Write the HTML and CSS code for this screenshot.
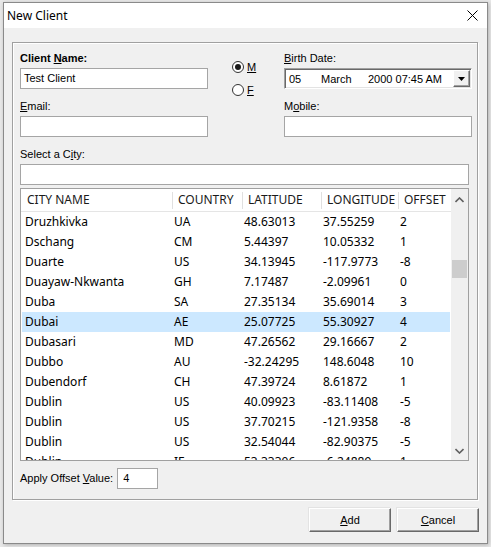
FILE: index.html
```html
<!DOCTYPE html>
<html>
<head>
<meta charset="utf-8">
<link rel="stylesheet" href="styles.css">
</head>
<body>
<div class="window">
  <div class="titlebar">
    <span class="title">New Client</span>
    <svg class="close" width="11" height="11" viewBox="0 0 11 11"><path d="M0.5 0.5 L10.5 10.5 M10.5 0.5 L0.5 10.5" stroke="#000" stroke-width="1"/></svg>
  </div>
  <div class="client">
    <div class="group">
      <div class="top-grid">
        <div class="field name">
          <div class="lbl bold">Client <u>N</u>ame:</div>
          <div class="textbox">Test Client</div>
        </div>
        <div class="radios">
          <div class="radio"><span class="circle checked"></span><u>M</u></div>
          <div class="radio"><span class="circle"></span><u>F</u></div>
        </div>
        <div class="field birth">
          <div class="lbl"><u>B</u>irth Date:</div>
          <div class="datepicker">
            <span class="d-day">05</span><span class="d-month">March</span><span class="d-rest">2000 07:45 AM</span>
            <span class="dd-btn"><svg width="7" height="4" viewBox="0 0 7 4"><path d="M0 0 H7 L3.5 4 Z" fill="#000"/></svg></span>
          </div>
        </div>
        <div class="field email">
          <div class="lbl"><u>E</u>mail:</div>
          <div class="textbox"></div>
        </div>
        <div class="field mobile">
          <div class="lbl">M<u>o</u>bile:</div>
          <div class="textbox"></div>
        </div>
      </div>
      <div class="field city">
        <div class="lbl">Select a C<u>i</u>ty:</div>
        <div class="textbox"></div>
      </div>
      <div class="listview">
        <div class="lv-main">
          <div class="lv-head">
            <div class="hc first">CITY NAME</div>
            <div class="hc">COUNTRY</div>
            <div class="hc">LATITUDE</div>
            <div class="hc">LONGITUDE</div>
            <div class="hc last">OFFSET</div>
          </div>
          <div class="lv-rows">
            <div class="lv-row"><span class="c1">Druzhkivka</span><span>UA</span><span>48.63013</span><span>37.55259</span><span>2</span></div>
            <div class="lv-row"><span class="c1">Dschang</span><span>CM</span><span>5.44397</span><span>10.05332</span><span>1</span></div>
            <div class="lv-row"><span class="c1">Duarte</span><span>US</span><span>34.13945</span><span>-117.9773</span><span>-8</span></div>
            <div class="lv-row"><span class="c1">Duayaw-Nkwanta</span><span>GH</span><span>7.17487</span><span>-2.09961</span><span>0</span></div>
            <div class="lv-row"><span class="c1">Duba</span><span>SA</span><span>27.35134</span><span>35.69014</span><span>3</span></div>
            <div class="lv-row selected"><span class="c1">Dubai</span><span>AE</span><span>25.07725</span><span>55.30927</span><span>4</span></div>
            <div class="lv-row"><span class="c1">Dubasari</span><span>MD</span><span>47.26562</span><span>29.16667</span><span>2</span></div>
            <div class="lv-row"><span class="c1">Dubbo</span><span>AU</span><span>-32.24295</span><span>148.6048</span><span>10</span></div>
            <div class="lv-row"><span class="c1">Dubendorf</span><span>CH</span><span>47.39724</span><span>8.61872</span><span>1</span></div>
            <div class="lv-row"><span class="c1">Dublin</span><span>US</span><span>40.09923</span><span>-83.11408</span><span>-5</span></div>
            <div class="lv-row"><span class="c1">Dublin</span><span>US</span><span>37.70215</span><span>-121.9358</span><span>-8</span></div>
            <div class="lv-row"><span class="c1">Dublin</span><span>US</span><span>32.54044</span><span>-82.90375</span><span>-5</span></div>
            <div class="lv-row"><span class="c1">Dublin</span><span>IE</span><span>53.33306</span><span>-6.24889</span><span>1</span></div>
          </div>
        </div>
        <div class="scrollbar">
          <svg class="arrow" width="9" height="6" viewBox="0 0 9 6"><path d="M0.5 5 L4.5 1 L8.5 5" fill="none" stroke="#606060" stroke-width="1.6"/></svg>
          <div class="track"><div class="thumb"></div></div>
          <svg class="arrow" width="9" height="6" viewBox="0 0 9 6"><path d="M0.5 1 L4.5 5 L8.5 1" fill="none" stroke="#606060" stroke-width="1.6"/></svg>
        </div>
      </div>
      <div class="offset-row">
        <span class="lbl">Apply Offset <u>V</u>alue:</span>
        <div class="textbox small">4</div>
      </div>
    </div>
    <div class="buttons">
      <div class="btn"><u>A</u>dd</div>
      <div class="btn"><u>C</u>ancel</div>
    </div>
  </div>
</div>
</body>
</html>
```

FILE: styles.css
```css
* {
  box-sizing: border-box;
}

html, body {
  margin: 0;
  padding: 0;
}

body {
  width: 491px;
  height: 547px;
  background: #e9e9e9;
  font-family: "Liberation Sans", Arial, sans-serif;
  font-size: 11px;
  color: #000;
  overflow: hidden;
  padding-top: 2px;
  padding-left: 3px;
}

.window {
  width: 485px;
  height: 542px;
  border: 1px solid #8a8a8a;
  background: #f0f0f0;
  display: flex;
  flex-direction: column;
  box-shadow: 1px 1px 4px rgba(0, 0, 0, 0.25);
}

.titlebar {
  height: 25px;
  flex: none;
  background: #fff;
  display: flex;
  align-items: center;
  justify-content: space-between;
  padding: 0 9px 0 3px;
}

.title {
  font-family: "Noto Sans", "Open Sans", sans-serif;
  font-size: 12px;
  color: #000;
}

.close {
  display: block;
}

.client {
  flex: 1;
  padding: 14px 8px 0 8px;
}

.group {
  border: 1px solid #a0a0a0;
  box-shadow: inset 1px 1px 0 #fff, 1px 1px 0 #fff;
  height: 458px;
  width: 466px;
  padding: 9px 8px 0 7px;
}

.top-grid {
  display: grid;
  grid-template-columns: 188px 1fr 188px;
  grid-template-rows: 37px 48px;
  margin-right: -3px;
}

.name {
  grid-column: 1;
  grid-row: 1;
}

.radios {
  grid-column: 2;
  grid-row: 1 / span 2;
}

.birth {
  grid-column: 3;
  grid-row: 1;
}

.email {
  grid-column: 1;
  grid-row: 2;
  padding-top: 11px;
}

.mobile {
  grid-column: 3;
  grid-row: 2;
  padding-top: 11px;
}

.field {
  display: flex;
  flex-direction: column;
}

.lbl {
  line-height: 13px;
  height: 13px;
  white-space: nowrap;
}

.field .lbl {
  margin-bottom: 3px;
}

.bold {
  font-weight: bold;
}

.textbox {
  height: 21px;
  border: 1px solid #a5a5a5;
  background: #fff;
  padding: 3px 3px;
  line-height: 13px;
  flex: none;
}

.radios {
  padding-left: 24px;
  padding-top: 9px;
}

.radio {
  display: flex;
  align-items: center;
  height: 12px;
  margin-bottom: 11px;
  line-height: 12px;
}

.circle {
  width: 12px;
  height: 12px;
  border: 1px solid #333;
  border-radius: 50%;
  background: #fff;
  margin-right: 3px;
  position: relative;
}

.circle.checked::after {
  content: "";
  position: absolute;
  left: 2px;
  top: 2px;
  width: 6px;
  height: 6px;
  border-radius: 50%;
  background: #1a1a1a;
}

.datepicker {
  height: 21px;
  background: #fff;
  border-top: 1px solid #a0a0a0;
  border-left: 1px solid #a0a0a0;
  border-right: 1px solid #fff;
  border-bottom: 1px solid #fff;
  box-shadow: inset 1px 1px 0 #696969, inset -1px -1px 0 #e3e3e3;
  display: flex;
  align-items: center;
  padding-left: 4px;
  padding-right: 1px;
}

.d-day {
  width: 32px;
}

.d-month {
  width: 47px;
}

.d-rest {
  flex: 1;
}

.dd-btn {
  width: 17px;
  height: 17px;
  background: #f0f0f0;
  border-top: 1px solid #fff;
  border-left: 1px solid #fff;
  border-right: 1px solid #696969;
  border-bottom: 1px solid #696969;
  box-shadow: inset -1px -1px 0 #a0a0a0;
  display: flex;
  align-items: center;
  justify-content: center;
}

.dd-btn svg {
  display: block;
}

.city {
  margin-top: 11px;
}

.city .lbl {
  margin-bottom: 3px;
}

.listview {
  margin-top: 3px;
  height: 273px;
  border: 1px solid #a0a0a0;
  background: #fff;
  display: flex;
  overflow: hidden;
}

.lv-main {
  flex: 1;
  min-width: 0;
  overflow: hidden;
  font-family: "Noto Sans", "Open Sans", sans-serif;
  font-size: 12px;
}

.lv-head {
  display: grid;
  grid-template-columns: 152px 70px 79px 77px 1fr;
  height: 23px;
  border-bottom: 1px solid #e5e5e5;
  color: #1a1a1a;
}

.hc {
  padding-left: 5px;
  line-height: 22px;
  position: relative;
  white-space: nowrap;
}

.hc.first {
  padding-left: 6px;
}

.hc::after {
  content: "";
  position: absolute;
  right: 0;
  top: 3px;
  bottom: 2px;
  width: 1px;
  background: #e0e0e0;
}

.hc.last::after {
  display: none;
}

.lv-row {
  display: grid;
  grid-template-columns: 152px 70px 79px 77px 1fr;
  height: 20px;
  line-height: 19px;
  white-space: nowrap;
  margin: 0 1px 0 0;
}

.lv-row span {
  padding-left: 1px;
  overflow: hidden;
}

.lv-row span.c1 {
  padding-left: 4px;
}

.lv-row.selected {
  background: #cce8ff;
  margin-left: 1px;
  grid-template-columns: 151px 70px 79px 77px 1fr;
}

.lv-row.selected span.c1 {
  padding-left: 3px;
}

.scrollbar {
  width: 17px;
  flex: none;
  background: #f0f0f0;
  display: flex;
  flex-direction: column;
  align-items: center;
}

.arrow {
  display: block;
  flex: none;
}

.scrollbar .arrow:first-child {
  margin-top: 8px;
  margin-bottom: 5px;
}

.scrollbar .arrow:last-child {
  margin-top: 4px;
  margin-bottom: 6px;
}

.track {
  flex: 1;
  width: 100%;
  padding: 0 1px;
}

.thumb {
  margin-top: 52px;
  height: 18px;
  background: #cdcdcd;
}

.offset-row {
  display: flex;
  align-items: center;
  margin-top: 7px;
}

.offset-row .lbl {
  margin-right: 4px;
}

.textbox.small {
  width: 41px;
  padding-left: 5px;
}

.buttons {
  display: flex;
  justify-content: flex-end;
  gap: 6px;
  margin-top: 8px;
}

.btn {
  width: 82px;
  height: 24px;
  background: #f0f0f0;
  border-top: 1px solid #fff;
  border-left: 1px solid #fff;
  border-right: 1px solid #696969;
  border-bottom: 1px solid #696969;
  box-shadow: inset -1px -1px 0 #a0a0a0, -1px -1px 0 #e3e3e3;
  display: flex;
  align-items: center;
  justify-content: center;
  line-height: 13px;
}
```
